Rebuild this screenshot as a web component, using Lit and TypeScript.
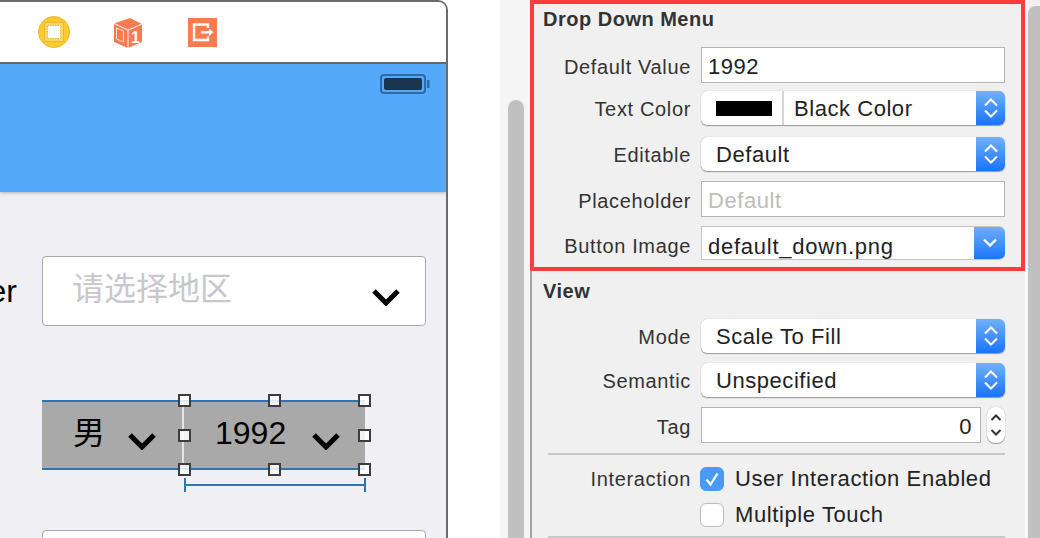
import { LitElement, html, css, svg } from 'lit';
import { customElement } from 'lit/decorators.js';

const updown = html`<svg width="16" height="26" viewBox="0 0 16 26" fill="none" stroke="#fff" stroke-width="2"><path d="M2 10.5 8 4.5l6 6M2 15.5l6 6 6-6"/></svg>`;
const down = html`<svg width="16" height="12" viewBox="0 0 16 12" fill="none" stroke="#fff" stroke-width="2.4"><path d="M2 2.5l6 6 6-6"/></svg>`;
const chevron = svg`<path d="M3 3l12 12L27 3" fill="none" stroke="#000" stroke-width="5"/>`;

@customElement('app-root')
class AppRoot extends LitElement {
  static styles = css`
    :host {
      display: block;
      width: 1040px;
      height: 538px;
      overflow: hidden;
      background: #fff;
      font-family: 'Liberation Sans', Arial, sans-serif;
    }
    .page {
      display: flex;
      height: 538px;
    }

    /* storyboard scene */
    .scene {
      width: 448px;
      height: 538px;
      flex: none;
      box-sizing: border-box;
      border-top: 2px solid #6b6b6b;
      border-right: 2px solid #6b6b6b;
      border-top-right-radius: 10px;
      overflow: hidden;
      display: flex;
      flex-direction: column;
      background: #efeff4;
    }
    .scene-bar {
      height: 62px;
      flex: none;
      box-sizing: border-box;
      background: #fff;
      border-bottom: 2px solid #6b6b6b;
      display: flex;
      align-items: center;
      padding-left: 38px;
    }
    .scene-bar svg { display: block; flex: none; }
    .nav {
      height: 128px;
      flex: none;
      background: #54a9fb;
      box-shadow: 0 1px 3px rgba(0, 0, 0, 0.25);
      display: flex;
      justify-content: flex-end;
      padding: 10px 16px 0 0;
      box-sizing: border-box;
    }
    .form {
      padding: 64px 20px 0 42px;
      position: relative;
    }
    .cut-label {
      position: absolute;
      left: 0;
      top: 81px;
      width: 17px;
      display: flex;
      justify-content: flex-end;
      overflow: hidden;
      font-size: 32px;
      line-height: 36px;
      color: #000;
    }
    .field {
      width: 384px;
      height: 70px;
      box-sizing: border-box;
      background: #fff;
      border: 1px solid #a9a9ad;
      border-radius: 4px;
      display: flex;
      justify-content: space-between;
      padding: 0 24px 0 29px;
      font-family: 'Liberation Sans', 'Noto Sans CJK SC', sans-serif;
      font-size: 32px;
      color: #c7c7cd;
      line-height: 64px;
    }
    .field svg { margin-top: 31px; }
    .pair {
      margin-top: 74px;
      width: 323px;
      height: 70px;
      box-sizing: border-box;
      border-top: 2px solid #2d74b5;
      border-bottom: 2px solid #2d74b5;
      background: #a9a9a9;
      display: flex;
      position: relative;
      font-family: 'Liberation Sans', 'Noto Sans CJK SC', sans-serif;
      font-size: 32px;
      color: #000;
    }
    .pair-item {
      display: flex;
      justify-content: space-between;
      box-sizing: border-box;
      line-height: 62px;
    }
    .pair-item svg { margin-top: 30px; }
    .pair-left { width: 140px; padding: 0 25px 0 31px; }
    .pair-right {
      width: 183px;
      padding: 0 24px 0 31px;
      border-left: 2px solid #e4e4e4;
    }
    .handle {
      position: absolute;
      width: 13px;
      height: 13px;
      box-sizing: border-box;
      border: 2px solid #3d3d3d;
      background: rgba(255, 255, 255, 0.85);
    }
    .measure {
      position: absolute;
      left: 142px;
      top: 76px;
      width: 182px;
      height: 14px;
      box-sizing: border-box;
      border-left: 2px solid #2d74b5;
      border-right: 2px solid #2d74b5;
      display: flex;
      align-items: center;
    }
    .measure::before {
      content: '';
      flex: 1;
      height: 2px;
      background: #2d74b5;
    }
    .field.next { margin-top: 60px; }

    /* gutter with scroller */
    .gutter {
      width: 82px;
      flex: none;
      box-sizing: border-box;
      background: linear-gradient(90deg, #fff 52px, #f5f5f5 52px);
      display: flex;
      padding: 100px 0 0 60px;
    }
    .gutter-thumb {
      width: 16px;
      height: 448px;
      border-radius: 8px 8px 0 0;
      background: #c0c0c0;
    }

    /* inspector */
    .inspector {
      flex: 1;
      height: 538px;
      background: #f0f0f0;
      color: #333;
      position: relative;
    }
    .thumb-right {
      position: absolute;
      left: 498px;
      top: 6px;
      bottom: -10px;
      width: 14px;
      border-radius: 8px 0 0 0;
      background: #c0c0c0;
    }
    .edge {
      position: absolute;
      left: 495px;
      top: 0;
      bottom: 0;
      width: 3px;
      background: #f7f7f7;
    }
    .drop {
      width: 495px;
      height: 271px;
      box-sizing: border-box;
      border: 4px solid #fc3d3d;
      padding: 5px 0 0 9px;
    }
    .view {
      width: 495px;
      box-sizing: border-box;
      height: 267px;
      border-left: 2px solid #a3a3a3;
      padding: 10px 0 0 11px;
    }
    h2 {
      margin: 0;
      font-size: 20px;
      line-height: 20px;
      font-weight: 700;
      letter-spacing: 0.5px;
      color: #333;
    }
    .rows { margin-top: 18px; }
    .row {
      display: flex;
      align-items: center;
      gap: 10px;
    }
    .g8 { margin-top: 8px; }
    .g9 { margin-top: 9px; }
    .g10 { margin-top: 10px; }
    .g12 { margin-top: 12px; }
    .lbl {
      width: 148px;
      flex: none;
      text-align: right;
      color: #333;
      font-size: 20px;
      letter-spacing: 0.65px;
      box-sizing: border-box;
      padding-top: 2px;
    }
    .lbl.input-lbl { padding-top: 4px; }
    .lbl.image-lbl { padding-top: 7px; }
    .input {
      width: 304px;
      height: 36px;
      flex: none;
      box-sizing: border-box;
      background: #fff;
      border: 1px solid #b4b4b4;
      padding: 0 6px;
      line-height: 37px;
      color: #222;
      font-size: 22px;
      letter-spacing: 0.55px;
    }
    .input.ph { color: #bdbdbd; }
    .popup {
      width: 304px;
      height: 34px;
      flex: none;
      box-sizing: border-box;
      background: #fff;
      border-radius: 6px;
      box-shadow: 0 1px 1px rgba(0, 0, 0, 0.35), 0 0 1px rgba(0, 0, 0, 0.3);
      display: flex;
      overflow: hidden;
      line-height: 36px;
      font-size: 22px;
      letter-spacing: 0.55px;
      color: #222;
    }
    .popup-text { flex: 1; padding-left: 15px; }
    .popup-text.after-swatch { padding-left: 10px; }
    .popup-btn {
      width: 29px;
      flex: none;
      background: linear-gradient(#70b1fb, #1973fb);
      display: flex;
      align-items: center;
      justify-content: center;
    }
    .swatch-cell {
      width: 66px;
      flex: none;
      border-right: 2px solid #d6d6d6;
      display: flex;
      align-items: center;
      padding-left: 15px;
    }
    .swatch { width: 56px; height: 15px; background: #000; }
    .combo {
      width: 304px;
      height: 34px;
      flex: none;
      box-sizing: border-box;
      background: #fff;
      border: 1px solid #c6c6c6;
      border-right: 0;
      border-radius: 0 6px 6px 0;
      display: flex;
      overflow: hidden;
      line-height: 39px;
      font-size: 22px;
      letter-spacing: 0.75px;
      color: #222;
    }
    .combo .popup-text { padding-left: 6px; }
    .combo .popup-btn { width: 31px; margin: -1px 0; }
    .tag-cell { width: 304px; display: flex; justify-content: space-between; align-items: center; }
    .tag-cell .input { width: 280px; text-align: right; padding-right: 8px; }
    .stepper {
      width: 18px;
      height: 36px;
      background: #fff;
      border-radius: 8px;
      box-shadow: 0 1px 1px rgba(0, 0, 0, 0.35), 0 0 1px rgba(0, 0, 0, 0.3);
      display: flex;
      align-items: center;
      justify-content: center;
    }
    .rule {
      height: 2px;
      margin: 10px 0 0 5px;
      width: 457px;
      background: #c8c8c8;
    }
    .rule.low { margin-top: 9px; }
    .checks { margin-top: 11px; }
    .check-row {
      display: flex;
      align-items: center;
      gap: 11px;
      font-size: 22px;
      letter-spacing: 0.6px;
      color: #222;
      height: 24px;
      line-height: 26px;
    }
    .checks .row { gap: 9px; }
    .box {
      width: 24px;
      height: 24px;
      flex: none;
      box-sizing: border-box;
      border-radius: 6px;
      background: #fff;
      border: 1px solid #bdbdbd;
      display: flex;
      align-items: center;
      justify-content: center;
    }
    .box.on { background: #4a9af5; border-color: #4a9af5; }
    .spacer { width: 148px; flex: none; }
  `;

  popup(text: string) {
    return html`<div class="popup">
      <div class="popup-text">${text}</div>
      <div class="popup-btn">${updown}</div>
    </div>`;
  }

  handles() {
    // selection handles sit on the corners and edges of the selected view
    const spots = [
      [136, -8], [226, -8], [316, -8],
      [136, 27], [316, 27],
      [136, 61], [226, 61], [316, 61],
    ];
    return spots.map(
      ([l, t]) => html`<div class="handle" style="left:${l}px;top:${t}px"></div>`
    );
  }

  render() {
    return html`
      <div class="page">
        <div class="scene">
          <div class="scene-bar">
            <svg width="32" height="32" viewBox="0 0 32 32">
              <circle cx="16" cy="16" r="15.5" fill="#fdcb2e" stroke="#efb52f" />
              <rect x="6.5" y="6.5" width="19" height="19" fill="#fbd768" stroke="#e9b53b" />
              <rect x="9.5" y="9.5" width="13" height="13" fill="#fff" stroke="#e9b53b" stroke-dasharray="1.5 1" />
            </svg>
            <svg style="margin-left:43px" width="30" height="31" viewBox="0 0 30 31">
              <path d="M1 6.5 17 1l12 6v18l-14 6L1 25z" fill="#fb7a4f" />
              <path d="M1 6.5 15 13l14-6M15 13v18" fill="none" stroke="#fff" />
              <path d="M3.5 11l7 3v11l-7-3z" fill="none" stroke="#fff" stroke-width="0.8" />
              <text x="18" y="26" font-size="16" font-weight="700" fill="#fff" font-family="Liberation Sans">1</text>
            </svg>
            <svg style="margin-left:45px" width="29" height="29" viewBox="0 0 29 29">
              <rect width="29" height="29" fill="#fb7a4f" />
              <path d="M20 10V6.5H6V22h14v-3.5" fill="none" stroke="#fff" stroke-width="2.4" />
              <path d="M13 14.3h9" stroke="#fff" stroke-width="2.4" />
              <path d="M21 10.5l4.5 3.8-4.5 3.8z" fill="#fff" />
            </svg>
          </div>
          <div class="nav">
            <svg width="50" height="20" viewBox="0 0 50 20">
              <rect x="1" y="1" width="44" height="18" rx="3" fill="none" stroke="#2b6ca8" stroke-width="2" />
              <rect x="4" y="4" width="38" height="12" rx="2" fill="#1a3550" />
              <rect x="47" y="6" width="2.5" height="8" fill="#2b6ca8" />
            </svg>
          </div>
          <div class="form">
            <div class="cut-label"><span>Gender</span></div>
            <div class="field">
              <span>请选择地区</span>
              <svg width="30" height="18" viewBox="0 0 30 18">${chevron}</svg>
            </div>
            <div class="pair">
              <div class="pair-item pair-left">
                <span>男</span>
                <svg width="30" height="18" viewBox="0 0 30 18">${chevron}</svg>
              </div>
              <div class="pair-item pair-right">
                <span>1992</span>
                <svg width="30" height="18" viewBox="0 0 30 18">${chevron}</svg>
              </div>
              ${this.handles()}
              <div class="measure"></div>
            </div>
            <div class="field next"></div>
          </div>
        </div>
        <div class="gutter">
          <div class="gutter-thumb"></div>
        </div>
        <div class="inspector">
          <div class="edge"></div>
          <div class="thumb-right"></div>
          <div class="drop">
            <h2>Drop Down Menu</h2>
            <div class="rows">
              <div class="row">
                <div class="lbl input-lbl">Default Value</div>
                <div class="input">1992</div>
              </div>
              <div class="row g8">
                <div class="lbl">Text Color</div>
                <div class="popup">
                  <div class="swatch-cell"><div class="swatch"></div></div>
                  <div class="popup-text after-swatch">Black Color</div>
                  <div class="popup-btn">${updown}</div>
                </div>
              </div>
              <div class="row g12">
                <div class="lbl">Editable</div>
                ${this.popup('Default')}
              </div>
              <div class="row g10">
                <div class="lbl input-lbl">Placeholder</div>
                <div class="input ph">Default</div>
              </div>
              <div class="row g9">
                <div class="lbl image-lbl">Button Image</div>
                <div class="combo">
                  <div class="popup-text">default_down.png</div>
                  <div class="popup-btn">${down}</div>
                </div>
              </div>
            </div>
          </div>
          <div class="view">
            <h2>View</h2>
            <div class="rows">
              <div class="row">
                <div class="lbl">Mode</div>
                ${this.popup('Scale To Fill')}
              </div>
              <div class="row g10">
                <div class="lbl">Semantic</div>
                ${this.popup('Unspecified')}
              </div>
              <div class="row g10">
                <div class="lbl input-lbl">Tag</div>
                <div class="tag-cell">
                  <div class="input">0</div>
                  <div class="stepper">
                    <svg width="14" height="30" viewBox="0 0 14 30" fill="none" stroke="#333" stroke-width="2">
                      <path d="M2.5 10l4.5-4.5 4.5 4.5M2.5 20l4.5 4.5 4.5-4.5" />
                    </svg>
                  </div>
                </div>
              </div>
            </div>
            <div class="rule"></div>
            <div class="checks">
              <div class="row">
                <div class="lbl">Interaction</div>
                <div class="check-row">
                  <div class="box on">
                    <svg width="16" height="16" viewBox="0 0 16 16" fill="none" stroke="#fff" stroke-width="2.2">
                      <path d="M2.5 8.5l4 5 7-11" />
                    </svg>
                  </div>
                  User Interaction Enabled
                </div>
              </div>
              <div class="row g12">
                <div class="spacer"></div>
                <div class="check-row"><div class="box"></div>Multiple Touch</div>
              </div>
            </div>
            <div class="rule low"></div>
          </div>
        </div>
      </div>
    `;
  }
}

export default AppRoot;
